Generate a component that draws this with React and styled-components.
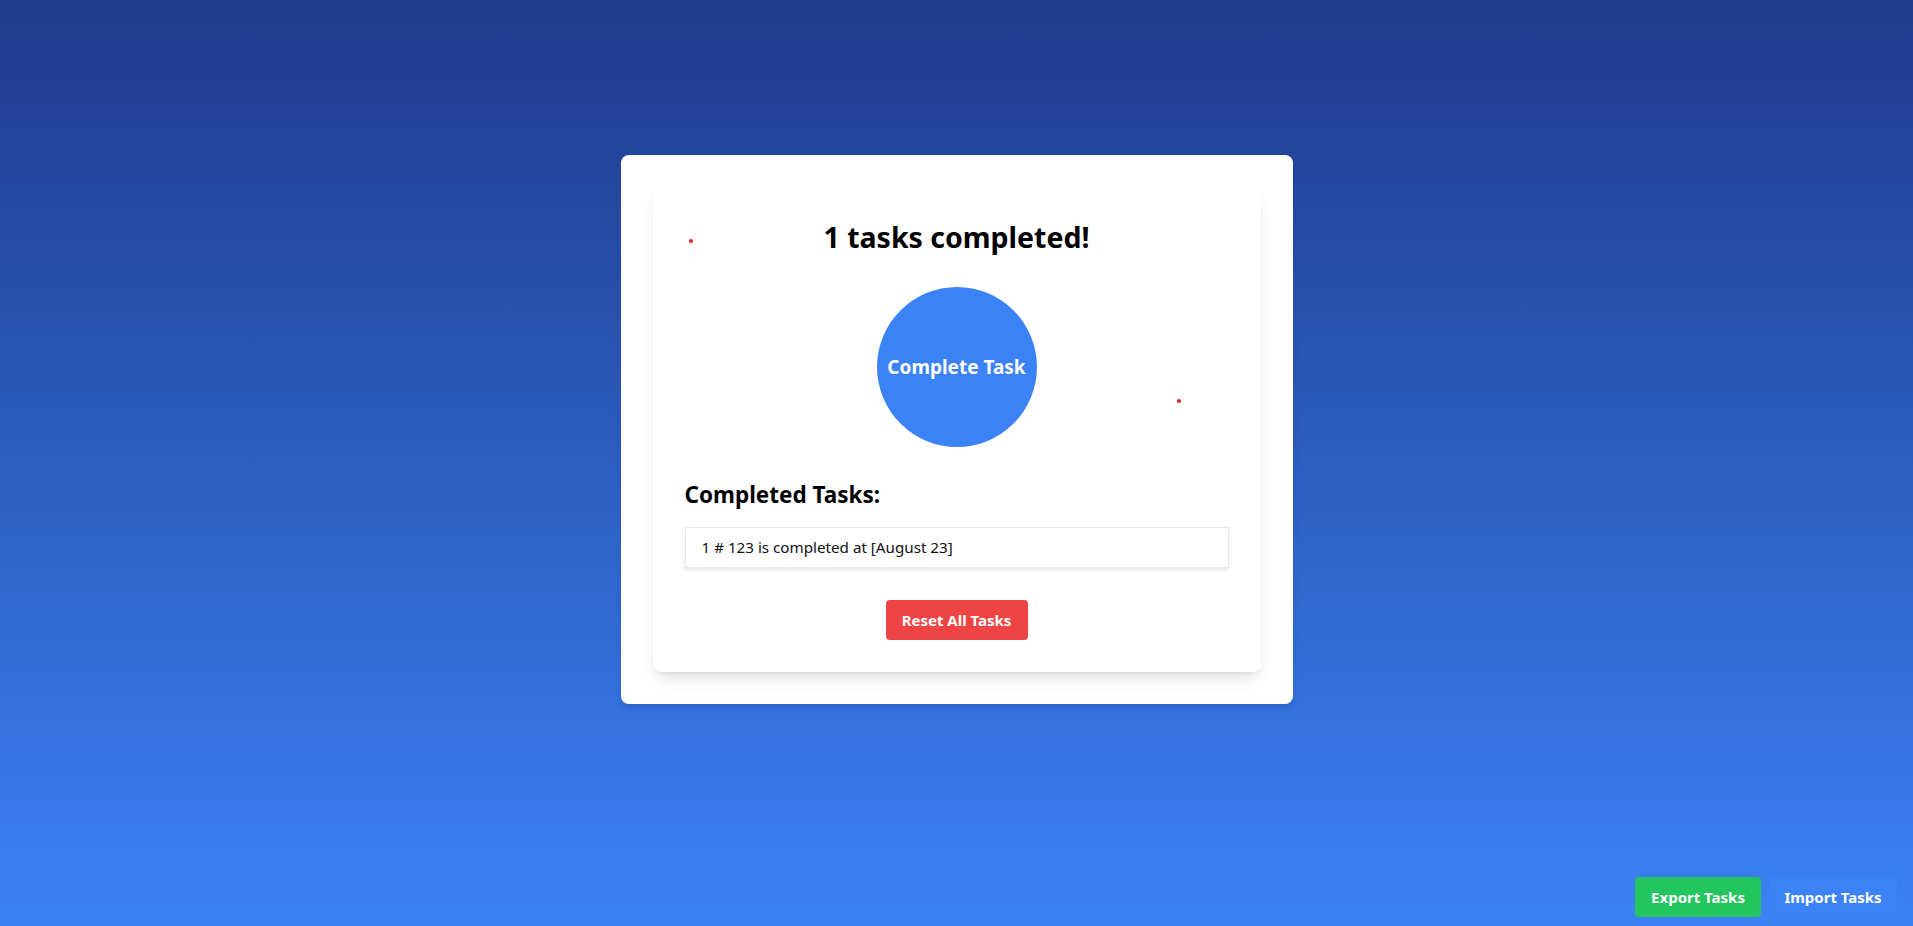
import React from "react";
import styled, { createGlobalStyle } from "styled-components";

const Global = createGlobalStyle`
  * { box-sizing: border-box; }
  html, body { margin: 0; padding: 0; height: 100%; }
  body {
    font-family: "Noto Sans", "Open Sans", "Liberation Sans", sans-serif;
    color: #000;
  }
`;

const Page = styled.div`
  min-height: 926px;
  background: linear-gradient(to bottom, #1e3a8a, #3b82f6);
  display: flex;
  justify-content: center;
  align-items: flex-start;
  padding-top: 155px;
  position: relative;
`;

const OuterCard = styled.div`
  width: 672px;
  background: #fff;
  border-radius: 8px;
  padding: 32px;
  box-shadow: 0 4px 6px rgba(0, 0, 0, 0.1);
`;

const InnerCard = styled.div`
  position: relative;
  background: #fff;
  border-radius: 8px;
  padding: 32px;
  box-shadow: 0 10px 15px -3px rgba(0, 0, 0, 0.1), 0 4px 6px -4px rgba(0, 0, 0, 0.1);
  display: flex;
  flex-direction: column;
  align-items: stretch;
`;

const Title = styled.h1`
  margin: 0;
  font-size: 28.5px;
  line-height: 36px;
  font-weight: 700;
  text-align: center;
`;

const CircleRow = styled.div`
  display: flex;
  justify-content: center;
  margin-top: 32px;
`;

const CircleButton = styled.button`
  width: 160px;
  height: 160px;
  border-radius: 50%;
  border: none;
  background: #3b82f6;
  color: #fff;
  font-family: inherit;
  font-size: 19px;
  font-weight: 700;
  cursor: pointer;
  padding: 0;
`;

const SectionTitle = styled.h2`
  margin: 32px 0 0;
  font-size: 22.5px;
  line-height: 32px;
  font-weight: 700;
`;

const List = styled.ul`
  list-style: none;
  margin: 16px 0 0;
  padding: 0;
`;

const ListItem = styled.li`
  border: 1px solid #e5e7eb;
  background: #fff;
  padding: 8px 16px;
  font-size: 15.2px;
  line-height: 23px;
  color: #111;
  box-shadow: 0 2px 4px rgba(0, 0, 0, 0.1);
`;

const ResetRow = styled.div`
  display: flex;
  justify-content: center;
  margin-top: 32px;
`;

const ActionButton = styled.button`
  height: 40px;
  padding: 0;
  border: none;
  border-radius: 4px;
  background: ${(p) => p.$bg};
  color: #fff;
  font-family: inherit;
  font-size: 15px;
  font-weight: 700;
  cursor: pointer;
  width: ${(p) => p.$w}px;
`;

const Dot = styled.span`
  position: absolute;
  width: 4px;
  height: 4px;
  border-radius: 50%;
  background: #ef1c1c;
  left: ${(p) => p.$x}px;
  top: ${(p) => p.$y}px;
`;

const FloatBar = styled.div`
  position: absolute;
  right: 16px;
  bottom: 9px;
  display: flex;
  gap: 8px;
`;

export default function App() {
  return (
    <>
      <Global />
      <Page>
        <OuterCard>
          <InnerCard>
            <Dot $x={36} $y={52} />
            <Dot $x={524} $y={212} />
            <Title>1 tasks completed!</Title>
            <CircleRow>
              <CircleButton>Complete Task</CircleButton>
            </CircleRow>
            <SectionTitle>Completed Tasks:</SectionTitle>
            <List>
              <ListItem>1 # 123 is completed at [August 23]</ListItem>
            </List>
            <ResetRow>
              <ActionButton $bg="#ef4444" $w={142}>Reset All Tasks</ActionButton>
            </ResetRow>
          </InnerCard>
        </OuterCard>
        <FloatBar>
          <ActionButton $bg="#22c55e" $w={126}>Export Tasks</ActionButton>
          <ActionButton $bg="#3b82f6" $w={128}>Import Tasks</ActionButton>
        </FloatBar>
      </Page>
    </>
  );
}
